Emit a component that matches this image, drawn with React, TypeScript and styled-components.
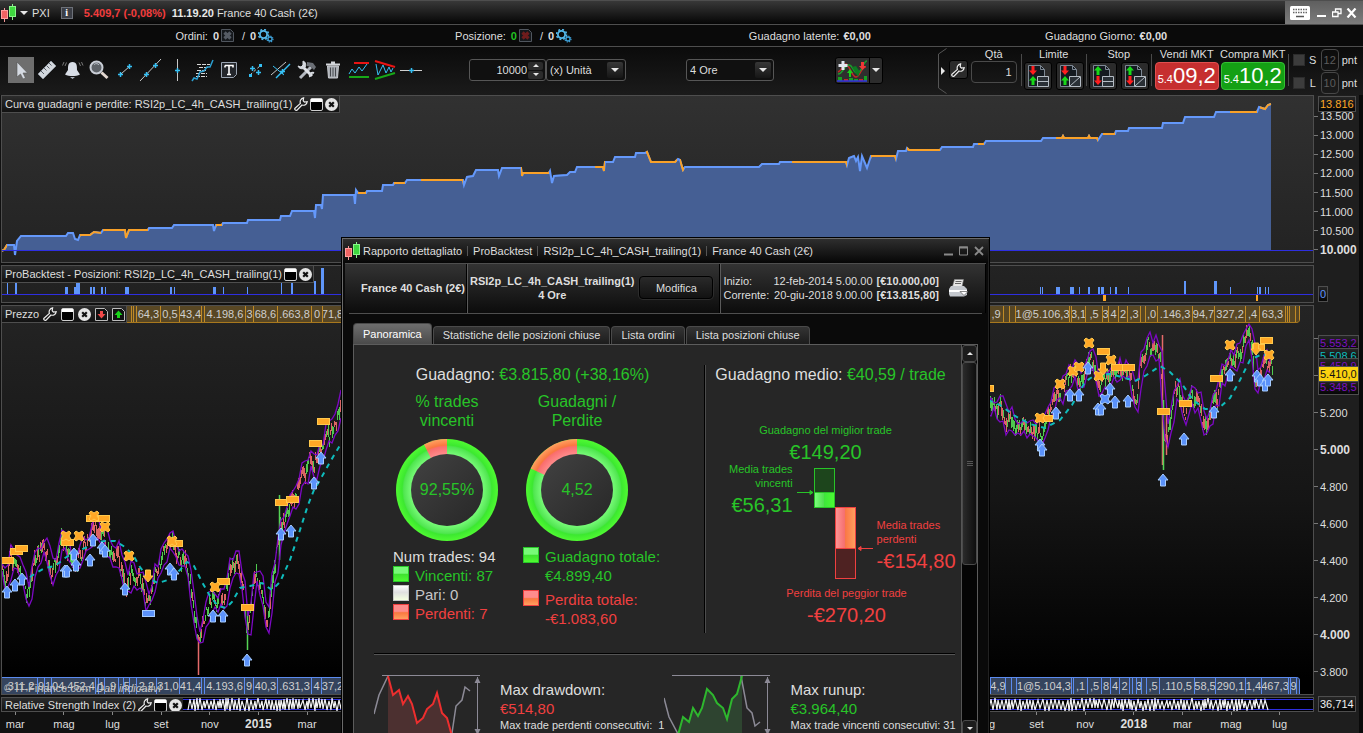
import React from "react";
import styled, { createGlobalStyle, css } from "styled-components";

const GlobalStyle = createGlobalStyle`
  * { box-sizing: border-box; }
  html, body, #root { height: 100%; }
  body {
    margin: 0;
    background: #0a0a0a;
    color: #dedede;
    font: 11px/14px "Liberation Sans", Arial, sans-serif;
    overflow: hidden;
  }
  button, input, select { font: inherit; color: inherit; margin: 0; padding: 0; border: 0; background: none; }
  svg { display: block; flex: none; }
  h1, h2, h3, p, dl, dd, dt, ul { margin: 0; padding: 0; font: inherit; list-style: none; }
`;

const LINE = "#4e4e4e";
const GREEN = "#28c428";
const RED = "#f04040";
const AMBER = "#ffa826";

/* ---------- helpers for the drawn series ---------- */

type Pt = [number, number];

const seeded = (seed: number) => () => {
  seed = (seed * 1664525 + 1013904223) % 4294967296;
  return seed / 4294967296;
};

const interpolate = (pts: Pt[], x: number) => {
  let i = 1;
  while (i < pts.length - 1 && pts[i][0] < x) i++;
  const [x0, y0] = pts[i - 1];
  const [x1, y1] = pts[i];
  return y0 + ((y1 - y0) * (x - x0)) / (x1 - x0);
};

const join = (pts: Pt[]) => pts.map((p) => p.join(",")).join(" ");

const equity: Pt[] = [
  [1, 250], [4, 249], [7, 244], [14, 244], [15, 254], [17, 240], [21, 235], [66, 235], [68, 232], [73, 232], [75, 238], [78, 239], [80, 234],
  [90, 234], [94, 231], [101, 232], [103, 229], [125, 229], [126, 237], [129, 229], [148, 229], [149, 227], [172, 227], [174, 224],
  [213, 224], [214, 230], [216, 224], [222, 224], [223, 222], [247, 222], [248, 219], [280, 219], [281, 215], [290, 215], [292, 210],
  [314, 210], [315, 217], [316, 204], [321, 204], [322, 208], [323, 194], [354, 194], [355, 203], [356, 189], [358, 192], [366, 192],
  [367, 190], [382, 190], [383, 184], [393, 184], [394, 182], [405, 182], [407, 179], [463, 179], [464, 184], [467, 176], [473, 175],
  [476, 169], [498, 169], [499, 175], [502, 167], [521, 167], [522, 175], [523, 172], [549, 172], [550, 170], [552, 182], [554, 175],
  [567, 174], [570, 171], [575, 171], [577, 166], [603, 166], [604, 170], [605, 161], [613, 161], [615, 156], [635, 156], [636, 152],
  [645, 152], [647, 151], [651, 161], [675, 161], [678, 158], [680, 159], [683, 169], [685, 166], [759, 166], [762, 163], [779, 163], [780, 161],
  [846, 161], [847, 164], [849, 157], [854, 155], [856, 160], [858, 156], [860, 170], [862, 155], [867, 167], [871, 155], [895, 155],
  [896, 158], [898, 150], [906, 150], [907, 147], [909, 149], [940, 149], [942, 146], [973, 146], [974, 143], [984, 143], [986, 140],
  [1041, 140], [1043, 137], [1062, 137], [1063, 135], [1064, 137], [1088, 137], [1089, 135], [1090, 137], [1097, 137], [1098, 139], [1102, 133],
  [1115, 133], [1116, 130], [1128, 130], [1129, 127], [1162, 127], [1163, 122], [1183, 122], [1185, 116], [1214, 116], [1216, 111],
  [1257, 111], [1259, 106], [1265, 108], [1268, 104], [1271, 103],
];

const equityFlat: Pt[] = [
  [1, 7], [80, 101], [103, 148], [216, 222], [358, 366], [394, 405], [421, 463], [521, 549], [595, 605], [646, 677], [680, 684],
  [792, 847], [871, 896], [907, 940], [978, 984], [1056, 1098], [1103, 1115], [1230, 1257], [1260, 1271],
];

const priceLeft: Pt[] = [
  [2, 572], [6, 575], [10, 560], [14, 556], [18, 560], [22, 576], [27, 594], [33, 572], [40, 550], [43, 547], [47, 560], [51, 572], [56, 560],
  [61, 548], [66, 546], [72, 556], [76, 554], [82, 550], [86, 545], [92, 530], [96, 529], [100, 536], [106, 545], [112, 554], [118, 548],
  [122, 570], [127, 575], [133, 563], [137, 580], [141, 595], [145, 604], [150, 599], [156, 575], [161, 562], [166, 545], [172, 547],
  [178, 555], [184, 562], [190, 582], [194, 610], [198, 643], [200, 646], [204, 620], [210, 605], [216, 596], [222, 600], [228, 578],
  [233, 562], [238, 560], [242, 575], [246, 628], [248, 622], [252, 585], [256, 576], [262, 595], [266, 618], [270, 602], [275, 570],
  [279, 525], [283, 520], [288, 515], [294, 500], [300, 482], [306, 468], [312, 458], [318, 450], [324, 443], [330, 440], [335, 425], [342, 396],
];

const priceRight: Pt[] = [
  [988, 415], [1000, 410], [1007, 420], [1013, 424], [1023, 434], [1030, 425], [1035, 438], [1041, 432], [1047, 418], [1055, 400],
  [1063, 383], [1077, 381], [1083, 373], [1088, 356], [1093, 365], [1098, 388], [1105, 387], [1110, 378], [1117, 374], [1123, 378],
  [1130, 381], [1137, 393], [1140, 360], [1150, 354], [1160, 354], [1162, 390], [1164, 430], [1167, 434], [1171, 420], [1177, 394],
  [1182, 392], [1185, 418], [1191, 400], [1197, 402], [1202, 434], [1210, 408], [1217, 392], [1223, 373], [1230, 358], [1240, 350],
  [1246, 334], [1252, 344], [1255, 370], [1260, 373], [1263, 360], [1272, 373],
];

const averageLeft: Pt[] = [
  [30, 577], [36, 573], [45, 568], [55, 566], [65, 558], [75, 552], [85, 548], [95, 543], [105, 541], [115, 541], [125, 547], [133, 555],
  [140, 567], [148, 578], [158, 583], [168, 580], [180, 570], [187, 562], [194, 566], [202, 582], [210, 596], [218, 606], [226, 608],
  [232, 602], [240, 588], [250, 586], [262, 583], [272, 590], [280, 582], [290, 560], [300, 530], [308, 505], [314, 490], [320, 480],
  [330, 462], [342, 442],
];

const averageRight: Pt[] = [
  [988, 400], [1000, 405], [1015, 416], [1030, 424], [1045, 428], [1060, 420], [1072, 405], [1085, 382], [1095, 375], [1110, 374],
  [1122, 377], [1135, 381], [1145, 376], [1160, 366], [1170, 372], [1182, 384], [1193, 400], [1205, 409], [1218, 409], [1230, 398],
  [1240, 380], [1250, 360], [1262, 354], [1271, 357],
];

const marks = {
  flat: [
    [7, 560], [16, 551], [21, 548], [67, 542], [103, 518], [92, 518], [176, 543], [223, 581], [247, 607], [281, 502], [292, 499], [315, 443],
    [323, 421], [987, 388], [1103, 351], [1117, 367], [1128, 367], [1216, 378], [1185, 403], [1163, 411], [1046, 418], [1258, 347], [1266, 340],
  ] as Pt[],
  cross: [
    [66, 536], [79, 536], [94, 516], [105, 527], [129, 556], [172, 541], [215, 587], [1040, 418], [1060, 384], [1073, 371], [1079, 367],
    [1089, 343], [1099, 376], [1111, 360], [1230, 345], [1269, 355],
  ] as Pt[],
  up: [
    [7, 592], [15, 585], [22, 579], [65, 571], [67, 571], [74, 554], [76, 565], [90, 560], [93, 540], [102, 548], [105, 551], [125, 589],
    [170, 569], [174, 574], [213, 616], [223, 616], [247, 660], [281, 534], [291, 531], [314, 483], [321, 458], [1056, 413], [1070, 395],
    [1079, 395], [1088, 368], [1098, 409], [1101, 409], [1110, 389], [1115, 402], [1128, 401], [1040, 445], [1042, 450], [1163, 480],
    [1184, 439], [1214, 412], [1230, 375], [1257, 376], [1260, 380], [1265, 385], [1268, 380],
  ] as Pt[],
  down: [[148, 576], [1103, 369], [1256, 349]] as Pt[],
};

const positionBars: [number, number, number][] = [
  [7, 1, 283], [15, 2, 283], [65, 3, 287], [74, 2, 287], [76, 4, 283], [90, 2, 287], [93, 2, 287], [101, 2, 287], [105, 1, 287],
  [125, 4, 287], [170, 2, 287], [174, 1, 287], [213, 3, 287], [223, 1, 287], [247, 1, 287], [281, 1, 283], [291, 2, 283], [314, 2, 281],
  [321, 3, 268], [1040, 1, 287], [1042, 1, 287], [1056, 4, 287], [1070, 4, 287], [1079, 1, 287], [1088, 2, 287], [1098, 2, 287],
  [1101, 3, 287], [1110, 1, 287], [1115, 2, 287], [1128, 1, 287], [1184, 2, 281], [1214, 3, 281], [1230, 1, 287], [1257, 1, 287],
  [1259, 2, 287], [1265, 1, 287], [1268, 1, 287],
];

/* ---------- shell ---------- */

const Shell = styled.div`
  position: relative;
  display: flex;
  flex-direction: column;
  height: 100vh;
  min-height: 600px;
  overflow: hidden;
  background: #0a0a0a;
`;

const TitleBar = styled.header`
  display: flex;
  align-items: stretch;
  height: 25px;
  border-top: 1px solid ${LINE};
  border-bottom: 1px solid ${LINE};
  background: linear-gradient(#383838, #050505);
  white-space: nowrap;
`;

const TitleInfo = styled.div`
  flex: 1;
  display: flex;
  align-items: center;
  padding-left: 1px;
`;

const Symbol = styled.button`
  display: flex;
  align-items: center;
  gap: 4px;
  margin-right: 11px;
`;

const InfoBadge = styled.button`
  width: 12px;
  height: 12px;
  margin-right: 11px;
  border: 1px solid #6c7078;
  background: #3b3e46;
  font: bold 10px/10px "Liberation Serif", serif;
  color: #fff;
`;

const Quote = styled.strong<{ $down?: boolean }>`
  margin-right: ${(p) => (p.$down ? 6 : 3)}px;
  color: ${(p) => (p.$down ? "#f23c3c" : "#e8e8e8")};
`;

const WindowControls = styled.div`
  display: flex;
  align-items: center;
  justify-content: center;
  gap: 4px;
  width: 78px;
  background: linear-gradient(#5f5f5f, #7c7c7c);
`;

const PlainButton = styled.button`
  display: inline-flex;
  align-items: center;
  justify-content: center;
`;

const StatusRow = styled.div`
  display: grid;
  grid-template-columns: 286fr 292fr 297fr 296fr;
  align-items: center;
  height: 22px;
  padding: 0 109px 0 84px;
  border-bottom: 1px solid ${LINE};
  background: #0a0a0a;
`;

const StatusItem = styled.div`
  display: flex;
  align-items: center;
  justify-content: center;
  gap: 4px;
  white-space: nowrap;
`;

const Count = styled.b<{ $green?: boolean }>`
  margin-left: 1px;
  color: ${(p) => (p.$green ? "#22c322" : "#dedede")};
  & + svg { margin-left: -2px; margin-right: 4px; }
`;

const Toolbar = styled.div`
  display: flex;
  align-items: center;
  height: 48px;
  padding-bottom: 2px;
  background: linear-gradient(#0b0b0b, #1b1b1b);
`;

const ToolList = styled.div`
  display: flex;
  flex: none;
  width: 469px;
  padding-left: 8px;
`;

const ToolButton = styled.button<{ $active?: boolean }>`
  display: flex;
  align-items: center;
  justify-content: center;
  width: 26px;
  height: 26px;
  background: ${(p) => (p.$active ? "#6e6e6e" : "none")};
`;

const Field = styled.div<{ $w: number; $apart?: boolean }>`
  position: relative;
  display: flex;
  align-items: center;
  flex: none;
  width: ${(p) => p.$w}px;
  height: 22px;
  margin-left: ${(p) => (p.$apart ? 60 : 0)}px;
  border: 1px solid #565656;
  border-radius: 3px;
  background: #101010;
`;

const NumberInput = styled.input`
  flex: 1;
  min-width: 0;
  text-align: right;
  padding-right: 1px;
  outline: 0;
`;

const Stepper = styled.div`
  display: flex;
  flex-direction: column;
  gap: 1px;
  margin-right: 2px;
`;

const StepButton = styled(PlainButton)`
  width: 15px;
  height: 8px;
  border-radius: 2px;
  background: #2b2b2b;
`;

const Select = styled.select`
  flex: 1;
  height: 20px;
  padding-left: 3px;
  appearance: none;
  outline: 0;
  option { background: #1a1a1a; }
`;

const SelectArrow = styled.span`
  position: absolute;
  right: 2px;
  top: 2px;
  display: flex;
  align-items: center;
  justify-content: center;
  width: 16px;
  height: 16px;
  border-radius: 2px;
  background: linear-gradient(#373737, #161616);
  pointer-events: none;
`;

const IndicatorGroup = styled.div`
  display: flex;
  flex: none;
  height: 27px;
  margin-left: 61px;
  border: 1px solid #000;
  border-radius: 3px;
  background: #2c2c2c;
  gap: 1px;
`;

const IndicatorMenu = styled(PlainButton)`
  width: 13px;
  border-left: 1px solid #000;
`;

const TradePanel = styled.div`
  display: flex;
  align-items: flex-start;
  align-self: flex-start;
  flex: none;
  margin-left: auto;
`;

const PanelGrip = styled(PlainButton)`
  width: 10px;
  height: 48px;
  margin-right: 1px;
`;

const Divider = styled.span`
  flex: none;
  width: 1px;
  height: 32px;
  margin: 7px 2px 0;
  background: #4a4a4a;
`;

const TradeGroup = styled.div`
  display: flex;
  flex-direction: column;
  align-items: center;
  gap: 1px;
  white-space: nowrap;
`;

const OptionsGroup = styled.div`
  padding-top: 13px;
`;

const QuantityGroup = styled(TradeGroup)`
  gap: 0;
  margin: 0 2px 0 3px;
`;

const QuantityInput = styled.input`
  width: 46px;
  height: 22px;
  padding-right: 4px;
  border: 1px solid #4a4a4a;
  border-radius: 4px;
  text-align: right;
`;

const DealGroup = styled(TradeGroup)`
  width: 66px;
`;

const TradeRow = styled.div`
  display: flex;
  gap: 4px;
`;

const DarkButton = styled(PlainButton)<{ $size: number }>`
  width: ${(p) => p.$size}px;
  height: ${(p) => p.$size}px;
  border: 1px solid #000;
  border-radius: 3px;
  background: #2b2b2b;
`;

const DealButton = styled.button<{ $color: string; $edge: string }>`
  width: 64px;
  height: 28px;
  padding: 0;
  border: 1px solid ${(p) => p.$edge};
  border-radius: 4px;
  background: ${(p) => p.$color};
  color: #fff;
  font-size: 22px;
  line-height: 26px;
  white-space: nowrap;
  small { font-size: 11px; }
`;

const StopRows = styled.div`
  display: flex;
  flex-direction: column;
  padding: 1px 6px 0 2px;
`;

const StopRow = styled.label`
  display: flex;
  align-items: center;
  gap: 3px;
  height: 23px;
  span { width: 10px; text-align: center; }
`;

const Check = styled.input`
  appearance: none;
  width: 12px;
  height: 12px;
  border: 1px solid #2c2c2c;
  background: #3c3c3c;
`;

const PointInput = styled.input`
  width: 18px;
  height: 22px;
  border: 1px solid #474747;
  border-radius: 4px;
  color: #5c5c5c;
  text-align: center;
`;

/* ---------- chart panels ---------- */

const Charts = styled.main`
  flex: 1;
  min-height: 0;
  display: flex;
  flex-direction: column;
  gap: 2px;
  padding: 0 4px 1px 1px;
  background: linear-gradient(90deg, #111 50%, #1e1e1e 50%, #1e1e1e calc(100% - 4px), #0a0a0a calc(100% - 4px));
`;

const panelHeight = {
  equity: css`flex: 0 0 168px;`,
  position: css`flex: 0 0 38px;`,
  price: css`flex: 1 1 0; min-height: 0;`,
  rsi: css`flex: 0 0 15px;`,
};

const Panel = styled.section<{ $kind: keyof typeof panelHeight }>`
  display: flex;
  ${(p) => panelHeight[p.$kind]}
`;

const plotFill = {
  equity: "linear-gradient(#313131, #222)",
  position: "linear-gradient(#232323, #202020)",
  price: "linear-gradient(#242424, #151515 50%, #000 96%)",
  rsi: "#000",
};

const Plot = styled.div<{ $kind: keyof typeof plotFill }>`
  position: relative;
  flex: 1;
  min-width: 0;
  border: 1px solid ${LINE};
  background: ${(p) => plotFill[p.$kind]};
  overflow: hidden;
`;

const Drawing = styled.svg`
  width: 100%;
  height: 100%;
`;

const PanelLabel = styled.div<{ $tall?: boolean; $gap?: number }>`
  position: absolute;
  left: 0;
  top: 0;
  z-index: 1;
  display: flex;
  align-items: center;
  gap: ${(p) => p.$gap ?? 2}px;
  height: ${(p) => (p.$tall ? 17 : 14)}px;
  padding: 0 1px 0 3px;
  border: solid ${LINE};
  border-width: ${(p) => (p.$tall ? "0 1px 1px 0" : "0")};
  background: linear-gradient(#2c2c2c, #121212);
  white-space: nowrap;
`;

const Axis = styled.aside`
  position: relative;
  flex: none;
  width: 45px;
  background: #1e1e1e;
`;

const Scale = styled.ol<{ $row: number; $top: number }>`
  display: flex;
  flex-direction: column;
  margin: 0;
  padding: ${(p) => p.$top}px 0 0;
  list-style: none;
  li {
    display: flex;
    align-items: center;
    gap: 2px;
    height: ${(p) => p.$row}px;
    white-space: nowrap;
  }
  li::before { content: ""; width: 4px; height: 1px; background: #777; }
  b { font-size: 12px; }
`;

const EquityScale = styled(Scale)`
  height: 162px;
  justify-content: space-between;
`;

const AxisTag = styled.div<{ $top: number; $color: string; $fill?: string }>`
  position: absolute;
  left: 4px;
  top: ${(p) => p.$top}px;
  height: 16px;
  padding: 0 1px;
  border: 1px solid ${LINE};
  background: ${(p) => p.$fill ?? "linear-gradient(#262626, #060606)"};
  color: ${(p) => p.$color};
  line-height: 14px;
`;

const Strip = styled.div<{ $blue?: boolean }>`
  position: absolute;
  left: 0;
  right: 13px;
  ${(p) => (p.$blue ? "bottom: 0;" : "top: 0;")}
  display: flex;
  height: 17px;
  overflow: hidden;
  border-${(p) => (p.$blue ? "top" : "bottom")}: 1px solid ${(p) => (p.$blue ? "#5b8bf0" : "#a8781e")};
  border-radius: ${(p) => (p.$blue ? "0 4px 0 0" : "0 0 4px 0")};
  background: ${(p) => (p.$blue ? "#35445e" : "#584724")};
`;

const StripCell = styled.span<{ $w: number; $blue?: boolean }>`
  display: flex;
  justify-content: center;
  flex: ${(p) => p.$w} ${(p) => p.$w} ${(p) => p.$w}px;
  min-width: 0;
  overflow: hidden;
  border-right: 1px solid ${(p) => (p.$blue ? "#5b8bf0" : "#c08a26")};
  line-height: 17px;
  white-space: nowrap;
  color: #cfcfcf;
`;

const Copyright = styled.small`
  position: absolute;
  left: 2px;
  bottom: -1px;
  font-size: 11px;
  color: #c4c4c4;
  i { margin-left: 2px; }
`;

const TimeAxis = styled.ol`
  flex: none;
  display: grid;
  grid-template-columns: repeat(27, 1fr);
  height: 20px;
  margin: -2px 55px 0 -10px;
  padding: 0;
  list-style: none;
  text-align: center;
  li::before { content: ""; display: block; width: 1px; height: 3px; margin: 0 auto 2px; background: #888; }
  b { font-size: 12px; }
`;

/* ---------- report window ---------- */

const Report = styled.section`
  position: absolute;
  z-index: 5;
  left: 341px;
  top: 237px;
  bottom: -6px;
  display: flex;
  flex-direction: column;
  width: 649px;
  border: 1px solid #000;
  background: #0a0a0a;
  box-shadow: inset 1px 1px 0 #6a6a6a, inset -1px 0 0 #222;
`;

const ReportTitle = styled.header`
  display: flex;
  align-items: center;
  flex: none;
  height: 24px;
  margin: 1px 1px 0;
  padding: 0 4px 0 2px;
  background: linear-gradient(#2e2e2e, #060606);
  white-space: nowrap;
  > span { margin-left: 3px; }
  > span + span { margin-left: 5px; padding-left: 5px; border-left: 1px solid #555; line-height: 10px; }
`;

const ReportButtons = styled.div`
  display: flex;
  gap: 5px;
  margin-left: auto;
`;

const ReportHead = styled.div`
  display: flex;
  align-items: stretch;
  flex: none;
  height: 50px;
  margin: 0 3px;
  border-top: 1px solid ${LINE};
  background: linear-gradient(#333, #0c0c0c);
`;

const HeadCell = styled.div<{ $w?: number }>`
  display: flex;
  align-items: center;
  justify-content: ${(p) => (p.$w ? "flex-end" : "flex-start")};
  flex: ${(p) => (p.$w ? `0 0 ${p.$w}px` : "1")};
  padding: 0 2px 2px;
  border-left: 1px solid #5a5a5a;
  box-shadow: inset -1px 0 0 #000;
  text-align: center;
  white-space: nowrap;
  &:first-child { border-left: 0; }
`;

const ModifyButton = styled.button`
  width: 74px;
  height: 23px;
  margin: 0 5px;
  border: 1px solid #000;
  border-radius: 4px;
  background: linear-gradient(#2a2a2a, #121212);
  box-shadow: 0 0 0 1px #2c2c2c;
`;

const Dates = styled.dl`
  display: grid;
  grid-template-columns: 50px auto auto;
  text-align: left;
  dd { text-align: right; }
  dd + dd { padding-left: 4px; }
`;

const PrintButton = styled(PlainButton)`
  margin-left: 9px;
`;

const Tabs = styled.div`
  display: flex;
  align-items: flex-end;
  flex: none;
  gap: 1px;
  margin: 0 7px;
  padding: 9px 4px 0;
  border-top: 1px solid ${LINE};
`;

const Tab = styled.button<{ $active?: boolean }>`
  height: ${(p) => (p.$active ? 21 : 18)}px;
  padding: 0 9px 1px;
  border: 1px solid #4a4a4a;
  border-bottom: 0;
  border-radius: 4px 4px 0 0;
  background: ${(p) => (p.$active ? "linear-gradient(#6e6e6e, #4a4a4a)" : "linear-gradient(#343434, #1c1c1c)")};
  color: ${(p) => (p.$active ? "#fff" : "#dedede")};
  white-space: nowrap;
`;

const ReportBody = styled.div`
  flex: 1;
  min-height: 0;
  display: flex;
  margin: 0 11px;
  border: 1px solid #5c5c5c;
  background: #262626;
`;

const Summary = styled.div`
  flex: 1;
  padding: 20px 6px 0 20px;
  overflow: hidden;
`;

const SummaryTop = styled.div`
  display: flex;
  height: 290px;
  border-bottom: 1px solid #555;
  box-shadow: inset 0 -1px 0 #000;
`;

const LeftHalf = styled.div`
  flex: none;
  width: 332px;
  height: 268px;
  padding-right: 14px;
  border-right: 1px solid #4c4c4c;
  box-shadow: inset -1px 0 0 #000;
`;

const Heading = styled.h2`
  font-size: 16px;
  line-height: 19px;
  white-space: nowrap;
  text-align: center;
`;

const Tone = styled.span<{ $c: string }>`
  color: ${(p) => p.$c};
`;

const DonutRow = styled.div`
  display: flex;
  gap: 2px;
  padding: 8px 0 0 9px;
`;

const DonutBox = styled.div`
  position: relative;
  display: flex;
  flex-direction: column;
  align-items: center;
  gap: 9px;
  width: 128px;
  color: ${GREEN};
  font-size: 16px;
  line-height: 19px;
  text-align: center;
`;

const DonutValue = styled.span`
  position: absolute;
  left: 0;
  right: 0;
  bottom: 42px;
`;

const Legends = styled.div`
  display: grid;
  grid-template-columns: 130px 1fr;
  padding: 6px 0 0 19px;
  font-size: 15px;
  line-height: 19px;
`;

const LegendItem = styled.p<{ $c?: string; $space?: boolean }>`
  display: flex;
  gap: 6px;
  margin-bottom: ${(p) => (p.$space ? 5 : 0)}px;
  color: ${(p) => p.$c ?? "#dedede"};
  white-space: nowrap;
`;

const Swatch = styled.i<{ $edge: string; $fill: string }>`
  flex: none;
  width: 16px;
  height: 16px;
  border: 1px solid ${(p) => p.$edge};
  background: ${(p) => p.$fill};
`;

const RightHalf = styled.div`
  flex: 1;
  min-width: 0;
  display: flex;
  flex-direction: column;
  align-items: center;
`;

const Caption = styled.p<{ $c: string }>`
  color: ${(p) => p.$c};
  white-space: nowrap;
`;

const Amount = styled.p<{ $c: string }>`
  color: ${(p) => p.$c};
  font-size: 20px;
  line-height: 30px;
  white-space: nowrap;
`;

const BestTrade = styled.div`
  margin-top: 39px;
  margin-right: 10px;
  text-align: center;
`;

const WorstTrade = styled.div`
  margin-top: 6px;
  margin-left: 32px;
  text-align: center;
`;

const BarsRow = styled.div`
  display: flex;
  align-items: flex-start;
  align-self: stretch;
  height: 118px;
  padding-left: 23px;
  margin-top: -5px;
`;

const WinSide = styled.div`
  width: 68px;
  padding-right: 3px;
  text-align: right;
`;

const LossSide = styled.div`
  padding-top: 56px;
`;

const SummaryBottom = styled.div`
  display: grid;
  grid-template-columns: 1fr 1fr;
  padding-top: 20px;
`;

const Extreme = styled.div`
  display: flex;
  gap: 18px;
  white-space: nowrap;
  h3 { padding-top: 5px; font-size: 15px; line-height: 19px; }
  p { font-size: 15px; line-height: 19px; }
  small { display: block; font-size: 11px; line-height: 14px; }
`;

const ScrollTrack = styled.div`
  display: flex;
  flex-direction: column;
  flex: none;
  width: 16px;
  border-left: 1px solid #555;
  background: #050505;
`;

const ScrollButton = styled(PlainButton)`
  flex: none;
  height: 17px;
  border: 1px solid #4a4a4a;
  border-radius: 3px;
  background: #1c1c1c;
`;

const ScrollThumb = styled.div`
  display: flex;
  align-items: center;
  justify-content: center;
  height: 206px;
  border: 1px solid #4a4a4a;
  border-radius: 3px;
  background: linear-gradient(90deg, #2b2b2b, #0e0e0e);
`;

const ScrollGap = styled.div`
  height: 157px;
`;

/* ---------- icons ---------- */

const CandleLogo = () => (
  <svg width="15" height="18" viewBox="0 0 15 18">
    <path d="M3.500 4v14" stroke="#f59a9a" />
    <rect x="0.500" y="6.500" width="6" height="8" fill="#f06464" stroke="#ff9e9e" />
    <path d="M11.500 0v16" stroke="#8af58a" />
    <rect x="8.500" y="2.500" width="6" height="10" fill="#3fd83f" stroke="#8af58a" />
  </svg>
);

const Triangle = ({ up, w = 8 }: { up?: boolean; w?: number }) => (
  <svg width={w} height={w / 2} viewBox="0 0 8 4">
    <path d={up ? "M0 4h8L4 0z" : "M0 0h8L4 4z"} fill="#e6e6e6" />
  </svg>
);

const Wrench = ({ size = 14 }: { size?: number }) => (
  <svg width={size} height={size} viewBox="0 0 14 14">
    <path
      d="M1 11.200L6.400 6.400C5.600 4.200 6.800 1.400 9.600 0.800L9.200 3.800l1.200 1.200L13.200 4.600c-.4 3-2.800 4.200-5.200 3.400L3 13.200C1.600 13.800 .2 12.400 1 11.200z"
      fill="#161616"
      stroke="#ececec"
      strokeWidth="1.200"
    />
  </svg>
);

const WindowIcon = () => (
  <svg width="13" height="13" viewBox="0 0 13 13">
    <rect x="0.500" y="0.500" width="12" height="12" rx="1.500" fill="#000" stroke="#cfcfcf" />
    <path d="M1 1h11v3H1z" fill="#fff" />
  </svg>
);

const CloseIcon = () => (
  <svg width="13" height="13" viewBox="0 0 13 13">
    <circle cx="6.500" cy="6.500" r="6.500" fill="#e4e4e4" />
    <path d="M4.200 4.200l4.600 4.600M8.800 4.200L4.200 8.800" stroke="#111" strokeWidth="2.200" />
  </svg>
);

const PageArrow = ({ up }: { up?: boolean }) => (
  <svg width="13" height="13" viewBox="0 0 13 13">
    <path d="M0.500 0.500h9l3 3v9h-12z" fill="#111" stroke="#bdbdbd" />
    <path d={up ? "M6.500 2.500l4 4.500h-2.500v3h-3V7H2.500z" : "M6.500 10.500l4-4.500h-2.500V3h-3v3H2.500z"} fill={up ? "#19d419" : "#f04848"} />
  </svg>
);

const CancelPage = ({ color }: { color: string }) => (
  <svg width="13" height="13" viewBox="0 0 13 13">
    <path d="M0.500 0.500h9l3 3v9h-12z" fill="#15181c" stroke="#50565e" />
    <path d="M3.500 3.500l6 6M9.500 3.500l-6 6" stroke={color} strokeWidth="3.200" />
  </svg>
);

const Gears = () => (
  <svg width="16" height="14" viewBox="0 0 16 14">
    <circle cx="5.500" cy="5.500" r="3.600" fill="none" stroke="#54b8ea" strokeWidth="1.800" />
    <circle cx="5.500" cy="5.500" r="5" fill="none" stroke="#54b8ea" strokeWidth="1.600" strokeDasharray="1.960 1.960" />
    <circle cx="12" cy="10" r="2" fill="none" stroke="#3d9fd6" strokeWidth="1.300" />
    <circle cx="12" cy="10" r="3" fill="none" stroke="#3d9fd6" strokeWidth="1.200" strokeDasharray="1.180 1.180" />
  </svg>
);

const CYAN = "#36c0f4";
const handle = (x: number, y: number) => <path key={`${x}-${y}`} d={`M${x - 2} ${y}.500h5M${x}.500 ${y - 2}v5`} stroke={CYAN} strokeWidth="1.500" />;

const tools: { name: string; art: React.ReactNode }[] = [
  { name: "Puntatore", art: <path d="M9 5v15l3.500-3 2.500 5 2.500-1-2.500-5h4.500z" fill="#d5dae2" stroke="#555" strokeWidth="0.600" /> },
  {
    name: "Righello",
    art: (
      <>
        <path d="M4 17L17 4l5 5L9 22z" fill="#d3d8de" stroke="#8d949c" />
        <path d="M7 14l3 3M10 11l2.500 2.500M12.500 8.500l3 3M15 6l2.500 2.500" stroke="#596069" />
      </>
    ),
  },
  {
    name: "Allarme",
    art: (
      <>
        <path d="M12.500 5C17 5 17 9 17 13l3 4.500c-4 2-11 2-15 0L8 13c0-4 0-8 4.500-8z" fill="#d8dde6" />
        <path d="M10 20h5l-2.500 2z" fill="#aab0ba" />
        <path d="M6.500 5.500L5 9M4 5L2.500 8.500M19 5.500L20.500 9M21.500 5L23 8.500" stroke="#777" />
      </>
    ),
  },
  {
    name: "Zoom",
    art: (
      <>
        <circle cx="10.500" cy="10.500" r="6" fill="#5d6268" stroke="#c9ced6" strokeWidth="2" />
        <path d="M8 7.500c2-1.500 4-1 5 .5" stroke="#b8bdc6" fill="none" />
        <path d="M15.500 15.500l6 5.500" stroke="#e2d7d0" strokeWidth="3" />
      </>
    ),
  },
  { name: "Segmento", art: <><path d="M9 17L18 9" stroke="#c8c8c8" />{handle(8, 17)}{handle(17, 9)}</> },
  { name: "Retta", art: <><path d="M2 24L23 2" stroke="#c8c8c8" />{handle(8, 17)}{handle(17, 8)}</> },
  { name: "Verticale", art: <><path d="M13.500 2v22" stroke="#c8c8c8" />{handle(13, 13)}</> },
  {
    name: "Regressione",
    art: (
      <>
        <path d="M7 7.500h13M9 10.500h10M7 13.500h10M6 16.500h11M6 19.500h11" stroke="#d8d8d8" strokeDasharray="4 1" />
        <path d="M2 24l2-3 3 1 3-7 4-1 3-4 3 0 3-7" fill="none" stroke="#2b9fd0" strokeWidth="1.500" />
      </>
    ),
  },
  {
    name: "Testo",
    art: (
      <>
        <path d="M5.500 5.500h15v12l-3 3h-12z" fill="#23262b" stroke="#9aa4b2" />
        <path d="M9 8.500h8v2M13 8.500v9M11 17.500h4M9 8.500v2" stroke="#fff" strokeWidth="1.600" fill="none" />
      </>
    ),
  },
  {
    name: "Punti",
    art: <><path d="M8 18L19 8" stroke="#c8c8c8" strokeDasharray="3 2" /><path d="M7 17h3v3H7zM17 7h3v3h-3z" fill={CYAN} />{handle(10, 11)}{handle(16, 15)}</>,
  },
  { name: "Canale", art: <><path d="M3 18L18 5" stroke="#c8c8c8" /><path d="M8 21L22 7" stroke={CYAN} strokeWidth="1.500" /><path d="M5 9l11 9" stroke={CYAN} />{handle(14, 14)}</> },
  {
    name: "Impostazioni",
    art: (
      <>
        <path d="M6 21L17 10" stroke="#b4b9c0" strokeWidth="3" />
        <path d="M13 5l6 1 3 4-2 3-3-3-4-1z" fill="#6b6f76" />
        <path d="M8 9l10 10" stroke="#e0e3e8" strokeWidth="3" />
        <path d="M9 4a4 4 0 1 1-5 5l3 1 2-2z" fill="#d4d8de" stroke="#d4d8de" />
        <path d="M16 20a3 3 0 0 1 4-4" stroke="#d4d8de" strokeWidth="2" fill="none" />
      </>
    ),
  },
  {
    name: "Cestino",
    art: (
      <>
        <path d="M7.500 9h11l-1 12h-9z" fill="#a9adb3" stroke="#c9ccd1" />
        <path d="M10.500 10.500v9M13 10.500v9M15.500 10.500v9" stroke="#45484d" />
        <path d="M6 7.500h14M11 5.500h4" stroke="#d3d6da" strokeWidth="2" />
      </>
    ),
  },
  {
    name: "Supporti",
    art: <><path d="M8 6h15" stroke="#e81414" strokeWidth="2" /><path d="M3 20h20" stroke="#17a817" strokeWidth="2" /><path d="M3 17l3-5 3 4 4-6 3 4 5-7" fill="none" stroke={CYAN} /></>,
  },
  {
    name: "Triangolo",
    art: <><path d="M3 4l20 6" stroke="#e81414" strokeWidth="2" /><path d="M3 22l20-6" stroke="#17a817" strokeWidth="2" /><path d="M4 7l2 11 5-10 3 8 3-6 2 5 2-4" fill="none" stroke={CYAN} /></>,
  },
  { name: "Orizzontale", art: <><path d="M2 13.500h22" stroke="#d0d0d0" />{handle(13, 13)}</> },
];

const OrderIcon = ({ stop, slash }: { stop?: boolean; slash?: boolean }) => {
  const green = "#18d818";
  const red = "#ff1e1e";
  const up = (x: number, y: number) => <path d={`M${x} ${y}l-4 4.500h2.500v4.500h3v-4.500H${x + 4}z`} fill={green} />;
  const down = (x: number, y: number) => <path d={`M${x} ${y}l-4-4.500h2.500v-4.500h3v4.500H${x + 4}z`} fill={red} />;
  return (
    <svg width="22" height="24" viewBox="0 0 22 24">
      <path d="M1.500 1.500h12l4 4v17h-16z" fill="#141a20" stroke="#7d8894" />
      <path d="M13.500 1.500v4h4" fill="none" stroke="#7d8894" />
      <path d="M10.500 12.500h11v10h-11z" fill="#2a3036" stroke="#b4bcc4" />
      <path d={slash ? "M11 22L21 13" : "M11 17.500h10"} stroke="#b4bcc4" />
      {stop ? up(6, 2) : down(6, 11)}
      {stop ? down(6, 21) : up(6, 12)}
    </svg>
  );
};

const IndicatorIcon = () => (
  <svg width="32" height="23" viewBox="0 0 32 23">
    <rect width="32" height="23" fill="#2e2e2e" />
    <path d="M2 13c4-1 5-8 8-8s6 13 10 13 5-10 10-10" fill="none" stroke="#c22626" strokeWidth="1.500" />
    <path d="M2 15c5 0 6-9 11-9 4 0 4 8 8 8 5 0 6-12 10-12" fill="none" stroke="#1d9b2d" strokeWidth="1.500" />
    <path d="M16 8l4-1 4 6-2 5z" fill="#0c7a20" />
    <path d="M7 2v9M2.500 6.500h9" stroke="#e3e6f0" strokeWidth="3" />
    <path d="M25 3v4h-2l3.500 4L30 7h-2V3z" fill="#f03838" />
    <path d="M13 18v-4h-2l3-4 3 4h-2v4z" fill="#19cf19" />
    <path d="M2 22v-4h4v4zM13 22v-3h4v3zM18 22v-2h4v2zM28 22v-5h3v5z" fill="#15a022" />
    <path d="M8 22v-2h4v2zM23 22v-2h4v2z" fill="#c22626" />
    <path d="M1 22h30" stroke="#3535e6" strokeWidth="1.500" />
  </svg>
);

const Printer = () => (
  <svg width="20" height="18" viewBox="0 0 20 18">
    <path d="M6.500 0.500h9l-1.500 7h-9.500z" fill="#e8e8e8" stroke="#888" strokeWidth="0.600" />
    <path d="M7.500 2.500h6M7 4.500h6" stroke="#666" />
    <path d="M3 7h13l3 3v6l-3 1.500H2L1 15v-5z" fill="#c4c8ce" />
    <path d="M1 12h18" stroke="#fff" strokeWidth="2" />
    <path d="M12 12.500h8l-4 4z" fill="#fff" stroke="#555" strokeWidth="0.700" />
  </svg>
);

/* ---------- drawings ---------- */

const EquityChart = () => (
  <Drawing viewBox="2 96 1311 166" preserveAspectRatio="none" aria-label="Curva guadagni e perdite">
    <clipPath id="flat-periods">
      {equityFlat.map(([a, b]) => (
        <rect key={a} x={a} y="96" width={b - a} height="166" />
      ))}
    </clipPath>
    <polygon points={`${join(equity)} 1271,250 1,250`} fill="#455f94" />
    <g fill="none" strokeWidth="2" transform="translate(0 1)">
      <polyline points={join(equity)} stroke="#6498fa" />
      <polyline points={join(equity)} stroke="#f9a128" clipPath="url(#flat-periods)" />
    </g>
    <path d="M2 250.500H1313" stroke="#2e2ee0" />
  </Drawing>
);

const PositionChart = () => (
  <Drawing viewBox="2 266 1311 36" preserveAspectRatio="none" aria-label="Posizioni">
    {positionBars.map(([x, w, y]) => (
      <rect key={x} x={x} y={y} width={w} height={294 - y} fill="#5f96fa" />
    ))}
    <path d="M1103 295h3v6h-3zM1256 295h2v6h-2z" fill={AMBER} />
    <path d="M2 294.500H1313" stroke="#2e2ee0" />
  </Drawing>
);

type SeriesProps = { points: Pt[]; average: Pt[]; seed: number; spikes: [number, number, number][] };

const PriceSeries = ({ points, average, seed, spikes }: SeriesProps) => {
  const rnd = seeded(seed);
  const from = points[0][0];
  const to = points[points.length - 1][0];
  const mids: number[] = [];
  let drift = 0;
  for (let x = from; x <= to; x++) {
    drift = drift * 0.75 + (rnd() - 0.5) * 15;
    mids.push(interpolate(points, x) + drift);
  }
  const upper: Pt[] = [];
  const lower: Pt[] = [];
  let green = "";
  let red = "";
  let rising = true;
  mids.forEach((mid, i) => {
    const x = from + i;
    if (rnd() > 0.6) rising = !rising;
    const seg = `M${x}.500 ${Math.round(mid - 1 - rnd() * 7)}V${Math.round(mid + 1 + rnd() * 7)}`;
    if (rising) green += seg;
    else red += seg;
    if (i % 3 === 0) {
      const near = mids.slice(Math.max(0, i - 3), i + 1);
      upper.push([x, Math.round(Math.min(...near) - rnd() * 10)]);
      lower.push([x, Math.round(Math.max(...near) + rnd() * 10)]);
    }
  });
  return (
    <g fill="none">
      <path d={green} stroke="#4fc94f" />
      <path d={red} stroke="#dc6464" />
      {spikes.map(([x, a, b]) => (
        <path key={x} d={`M${x}.500 ${a}V${b}`} stroke={x % 2 ? "#55d455" : "#e46a6a"} strokeWidth="1.500" />
      ))}
      <polyline points={join(upper)} stroke="#7d08c4" strokeWidth="1.300" />
      <polyline points={join(lower)} stroke="#7d08c4" strokeWidth="1.300" />
      <polyline points={join(average)} stroke="#0fbcbc" strokeWidth="2" strokeDasharray="5 5" />
    </g>
  );
};

const BLUE_EDGE = "#a6ccff";
const crossPath = "M-5-3l2-2 3 2 3-2 2 2-2 3 2 3-2 2-3-2-3 2-2-2 2-3z";
const arrowPath = "M0-6l5 6h-2.500v6h-5v-6h-2.500z";

const PriceChart = () => (
  <Drawing viewBox="2 306 1311 388" preserveAspectRatio="none" aria-label="Prezzo">
    <PriceSeries points={priceLeft} average={averageLeft} seed={7} spikes={[[198, 640, 675], [247, 610, 650], [279, 495, 560]]} />
    <PriceSeries points={priceRight} average={averageRight} seed={21} spikes={[[1162, 335, 465], [1163, 400, 470], [1166, 410, 455]]} />
    <g fill={AMBER} stroke="#ffc94d">
      {marks.flat.map(([x, y], i) => (
        <rect key={i} x={x - 6 + 0.5} y={y - 3 + 0.5} width="12" height="6" />
      ))}
      {marks.cross.map(([x, y], i) => (
        <path key={i} d={crossPath} transform={`translate(${x} ${y})`} />
      ))}
      {marks.down.map(([x, y], i) => (
        <path key={i} d={arrowPath} transform={`translate(${x} ${y}) rotate(180)`} />
      ))}
    </g>
    <g fill="#5b92fa" stroke={BLUE_EDGE}>
      {marks.up.map(([x, y], i) => (
        <path key={i} d={arrowPath} transform={`translate(${x} ${y})`} />
      ))}
      <path d={crossPath} transform="translate(1105 399)" />
      <rect x="142.500" y="610.500" width="12" height="6" />
    </g>
  </Drawing>
);

const RsiChart = () => {
  const rnd = seeded(5);
  const pts: Pt[] = [];
  for (let x = 188, i = 0; x < 1270; x += 1 + Math.round(rnd() * 1.6), i++) {
    pts.push([x, i % 2 ? 698 + Math.round(rnd() * 3) : 711 - Math.round(rnd() * 3)]);
  }
  return (
    <Drawing viewBox="2 698 1311 13" preserveAspectRatio="none" aria-label="RSI">
      <path d="M2 699.500H1313M2 709.500H1313" stroke="#2e2ee0" />
      <polyline points={join(pts)} fill="none" stroke="#f2f2f2" strokeWidth="1.200" />
    </Drawing>
  );
};

const Donut = ({ share }: { share: number }) => {
  const a = 2 * Math.PI * (1 - share);
  const at = (r: number) => `${51 - r * Math.sin(a)} ${51 - r * Math.cos(a)}`;
  return (
    <svg width="102" height="102" viewBox="0 0 102 102">
      <defs>
        <radialGradient id="win" gradientUnits="userSpaceOnUse" cx="51" cy="51" r="51">
          <stop offset="0.700" stopColor="#78fa78" />
          <stop offset="0.850" stopColor="#50e650" />
          <stop offset="0.880" stopColor="#3ce830" />
          <stop offset="1" stopColor="#50fa32" />
        </radialGradient>
        <radialGradient id="loss" gradientUnits="userSpaceOnUse" cx="51" cy="51" r="51">
          <stop offset="0.700" stopColor="#ff8c8c" />
          <stop offset="0.850" stopColor="#fa6e6e" />
          <stop offset="0.880" stopColor="#fa7840" />
          <stop offset="1" stopColor="#ffa060" />
        </radialGradient>
        <linearGradient id="hole" x1="0" y1="0" x2="1" y2="1">
          <stop offset="0" stopColor="#424242" />
          <stop offset="1" stopColor="#272727" />
        </linearGradient>
      </defs>
      <circle cx="51" cy="51" r="51" fill="url(#win)" />
      <path d={`M51 51L51 0A51 51 0 0 0 ${at(51)}z`} fill="url(#loss)" />
      <circle cx="51" cy="51" r="36" fill="url(#hole)" />
    </svg>
  );
};

const TradeBars = () => (
  <svg width="81" height="118" viewBox="797 463 81 118">
    <defs>
      <linearGradient id="bar-win"><stop offset="0" stopColor="#7dff7d" /><stop offset="0.450" stopColor="#52e052" /><stop offset="0.500" stopColor="#3ee83a" /><stop offset="1" stopColor="#4cfa32" /></linearGradient>
      <linearGradient id="bar-loss"><stop offset="0" stopColor="#ff9696" /><stop offset="0.450" stopColor="#f57070" /><stop offset="0.500" stopColor="#fa7846" /><stop offset="1" stopColor="#ffa060" /></linearGradient>
    </defs>
    <rect x="815.500" y="469.500" width="20" height="24" fill="#1d451c" stroke={GREEN} />
    <rect x="815.500" y="493.500" width="20" height="15" fill="url(#bar-win)" stroke={GREEN} />
    <rect x="836.500" y="508.500" width="20" height="41" fill="url(#bar-loss)" stroke={RED} />
    <rect x="836.500" y="549.500" width="20" height="30" fill="#4e2222" stroke={RED} />
    <path d="M798 493.500h16m-3-2l3 2-3 2z" stroke={GREEN} fill={GREEN} />
    <path d="M874 549.500h-15m3-2l-3 2 3 2z" stroke={RED} fill={RED} />
  </svg>
);

const DrawdownArt = () => (
  <svg width="108" height="80" viewBox="374 675 108 80">
    <path d="M388 676l5 19 6-5 4 14 5-8 4 8 5 19 6-5 4-9 6-5 4-11 5 20 5 5 5 18v20H388z" fill="#4c3030" />
    <path d="M374 714l5-19 9-19M452 733l4-27 6-6 3-13 5 4" fill="none" stroke="#8c8a96" strokeWidth="1.500" />
    <path d="M388 676l5 19 6-5 4 14 5-8 4 8 5 19 6-5 4-9 6-5 4-11 5 20 5 5 5 18" fill="none" stroke="#ee2e2e" strokeWidth="2" />
    <path d="M382 675.500h98M477.500 677v78" stroke="#8c8a96" />
    <path d="M477.500 677l3 6h-6zM477.500 735l3-6h-6z" fill="#8c8a96" />
  </svg>
);

const RunupArt = () => (
  <svg width="108" height="80" viewBox="664 675 108 80">
    <path d="M678 735l5-18 6 5 4-14 5 8 4-8 5-19 6 6 4 8 6 5 4 11 5-20 5-5 5-18V755H674z" fill="#2e4430" />
    <path d="M664 698l5 19 9 17M741 676l6 32 5 5 3 13 5-4" fill="none" stroke="#8c8a96" strokeWidth="1.500" />
    <path d="M678 735l5-18 6 5 4-14 5 8 4-8 5-19 6 6 4 8 6 5 4 11 5-20 5-5 5-18" fill="none" stroke="#2eb82e" strokeWidth="2" />
    <path d="M672 675.500h98M767.500 677v78" stroke="#8c8a96" />
    <path d="M767.500 677l3 6h-6zM767.500 735l3-6h-6z" fill="#8c8a96" />
  </svg>
);

/* ---------- strip and axis contents ---------- */

type Cell = [number, string];

const upperStrip: Cell[] = [
  [130, ""], [2, ""], [3, ""], [24, "64,3"], [19, "0,5"], [22, "43,4"], [3, ""], [41, "4.198,6"], [8, "3"], [24, "68,6"], [34, ".663,8"],
  [11, "0"], [20, "71,8"], [647, ""], [15, ",9"], [6, ""], [6, ""], [54, "1@5.106,3"], [2, ""], [14, "3,1"], [17, ",5"], [6, "3"],
  [10, "4"], [9, "2"], [13, ",3"], [5, ""], [12, ",0"], [35, ".146,3"], [22, "94,7"], [31, "327,2"], [14, ",4"], [26, "63,3"], [2, ""],
  [2, ""], [6, ""], [4, ""],
];

const lowerStrip: Cell[] = [
  [36, ".311,2"], [7, "9"], [7, "1"], [44, "04.452,4"], [3, ""], [6, "1"], [14, ",9"], [5, ""], [6, "5"], [7, ""], [20, "2,2"],
  [23, "31,0"], [22, "41,4"], [3, ""], [40, "4.193,6"], [9, "9"], [24, "40,3"], [34, ".631,3"], [10, "4"], [22, "37,2"], [647, ""],
  [15, "4,9"], [6, ""], [5, ""], [55, "1@5.104,3"], [2, ""], [14, ",1"], [14, ",5"], [9, "8"], [9, "4"], [10, "2"], [3, ""], [4, ""],
  [5, "3"], [5, ""], [13, ",5"], [35, ".110,5"], [21, "58,5"], [30, "290,1"], [16, "1,4"], [27, "467,3"], [2, ""], [6, "9"], [3, ""],
];

const equityTicks = ["13.500", "13.000", "12.500", "12.000", "11.500", "11.000", "10.500", "10.000"];
const priceTicks = ["5.600", "5.400", "5.200", "5.000", "4.800", "4.600", "4.400", "4.200", "4.000", "3.800"];
/* The ticks behind the report window carry no label. */
const coveredTicks: string[] = Array(12).fill("");
const timeline = ["mar", "mag", "lug", "set", "nov", "2015", "mar", ...coveredTicks, "", "lug", "set", "nov", "2018", "mar", "mag", "lug"];

const bold = (text: string, test: boolean) => (test ? <b>{text}</b> : text);

const swatchWin = "linear-gradient(#78fa78 0 45%, #3ee030 50%, #50fa32)";
const swatchLoss = "linear-gradient(#ff8c8c 0 45%, #fa7840 55%, #ffa060)";
const swatchEven = "linear-gradient(#fff, #e0e0e0 45%, #f4ffe0)";

export default function App() {
  return (
    <>
      <GlobalStyle />
      <Shell>
        <TitleBar>
          <TitleInfo>
            <Symbol>
              <CandleLogo />
              <Triangle />
              PXI
            </Symbol>
            <InfoBadge>i</InfoBadge>
            <Quote $down>5.409,7 (-0,08%)</Quote>
            <Quote>11.19.20</Quote>
            <span>France 40 Cash (2€)</span>
          </TitleInfo>
          <WindowControls>
            <PlainButton aria-label="Tastiera">
              <svg width="20" height="14" viewBox="0 0 20 14">
                <rect width="20" height="14" rx="1.500" fill="#fff" />
                <path d="M3 3.500h14M3 6.500h14" stroke="#666" strokeWidth="1.500" strokeDasharray="1.500 1" />
                <path d="M6 10.500h8" stroke="#555" strokeWidth="1.500" />
              </svg>
            </PlainButton>
            <PlainButton aria-label="Riduci">
              <svg width="14" height="12" viewBox="0 0 14 12"><path d="M3 9h9" stroke="#fff" strokeWidth="2" /></svg>
            </PlainButton>
            <PlainButton aria-label="Ripristina">
              <svg width="10" height="10" viewBox="0 0 10 10"><path d="M0.500 4h5.500v4.500H0.500zM3.500 4V1h5.500v4.500H6.500" fill="none" stroke="#fff" strokeWidth="1.300" /></svg>
            </PlainButton>
            <PlainButton aria-label="Chiudi">
              <svg width="12" height="10" viewBox="0 0 12 10"><path d="M1.500 0.500l8 9M9.500 0.500l-8 9" stroke="#fff" strokeWidth="2.200" /></svg>
            </PlainButton>
          </WindowControls>
        </TitleBar>

        <StatusRow>
          <StatusItem>Ordini: <Count>0</Count><CancelPage color="#555b64" /> / <Count>0</Count><Gears /></StatusItem>
          <StatusItem>Posizione: <Count $green>0</Count><CancelPage color="#6e1c1c" /> / <Count>0</Count><Gears /></StatusItem>
          <StatusItem>Guadagno latente: <b>€0,00</b></StatusItem>
          <StatusItem>Guadagno Giorno: <b>€0,00</b></StatusItem>
        </StatusRow>

        <Toolbar>
          <ToolList>
            {tools.map((t, i) => (
              <ToolButton key={t.name} $active={i === 0} aria-label={t.name}>
                <svg width="26" height="26" viewBox="0 0 26 26">{t.art}</svg>
              </ToolButton>
            ))}
          </ToolList>
          <Field $w={77}>
            <NumberInput aria-label="Quantità di barre" defaultValue="10000" />
            <Stepper>
              <StepButton aria-label="Aumenta"><Triangle up w={6} /></StepButton>
              <StepButton aria-label="Diminuisci"><Triangle w={6} /></StepButton>
            </Stepper>
          </Field>
          <Field $w={80}>
            <Select aria-label="Unità"><option>(x) Unità</option></Select>
            <SelectArrow><Triangle /></SelectArrow>
          </Field>
          <Field $w={88} $apart>
            <Select aria-label="Periodo"><option>4 Ore</option></Select>
            <SelectArrow><Triangle /></SelectArrow>
          </Field>
          <IndicatorGroup>
            <PlainButton aria-label="Indicatori"><IndicatorIcon /></PlainButton>
            <IndicatorMenu aria-label="Menu indicatori"><Triangle /></IndicatorMenu>
          </IndicatorGroup>

          <TradePanel>
            <PanelGrip aria-label="Comprimi">
              <svg width="10" height="46" viewBox="0 0 10 46">
                <path d="M8.500 0.500L0.500 6V40l8 5.500" fill="none" stroke="#555" />
                <path d="M3 19v8l4-4z" fill="#e6e6e6" />
              </svg>
            </PanelGrip>
            <OptionsGroup><DarkButton $size={19} aria-label="Opzioni"><Wrench /></DarkButton></OptionsGroup>
            <QuantityGroup>
              <label htmlFor="qty">Qtà</label>
              <QuantityInput id="qty" defaultValue="1" />
            </QuantityGroup>
            <Divider />
            <TradeGroup>
              Limite
              <TradeRow>
                <DarkButton $size={28} aria-label="Limite"><OrderIcon /></DarkButton>
                <DarkButton $size={28} aria-label="Limite personalizzato"><OrderIcon slash /></DarkButton>
              </TradeRow>
            </TradeGroup>
            <Divider />
            <TradeGroup>
              Stop
              <TradeRow>
                <DarkButton $size={28} aria-label="Stop"><OrderIcon stop /></DarkButton>
                <DarkButton $size={28} aria-label="Stop personalizzato"><OrderIcon stop slash /></DarkButton>
              </TradeRow>
            </TradeGroup>
            <Divider />
            <DealGroup>
              Vendi MKT
              <DealButton $color="#c62f2f" $edge="#e05050"><small>5.4</small>09,2</DealButton>
            </DealGroup>
            <DealGroup>
              Compra MKT
              <DealButton $color="#14a014" $edge="#34c034"><small>5.4</small>10,2</DealButton>
            </DealGroup>
            <Divider />
            <StopRows>
              <StopRow><Check type="checkbox" /><span>S</span><PointInput aria-label="S punti" defaultValue="12" disabled />pnt</StopRow>
              <StopRow><Check type="checkbox" /><span>L</span><PointInput aria-label="L punti" defaultValue="10" disabled />pnt</StopRow>
            </StopRows>
          </TradePanel>
        </Toolbar>

        <Charts>
          <Panel $kind="equity">
            <Plot $kind="equity">
              <PanelLabel $tall>Curva guadagni e perdite: RSI2p_LC_4h_CASH_trailing(1)<Wrench /><WindowIcon /><CloseIcon /></PanelLabel>
              <EquityChart />
            </Plot>
            <Axis>
              <EquityScale $row={14} $top={14}>
                {equityTicks.map((t) => <li key={t}>{bold(t, t === "10.000")}</li>)}
              </EquityScale>
              <AxisTag $top={1} $color={AMBER}>13.816</AxisTag>
            </Axis>
          </Panel>
          <Panel $kind="position">
            <Plot $kind="position">
              <PanelLabel $tall>ProBacktest - Posizioni: RSI2p_LC_4h_CASH_trailing(1)<WindowIcon /><CloseIcon /></PanelLabel>
              <PositionChart />
            </Plot>
            <Axis><AxisTag $top={21} $color="#5f96fa">0</AxisTag></Axis>
          </Panel>
          <Panel $kind="price">
            <Plot $kind="price">
              <PriceChart />
              <Strip>
                {upperStrip.map(([w, t], i) => <StripCell key={i} $w={w}>{t}</StripCell>)}
              </Strip>
              <Strip $blue>
                {lowerStrip.map(([w, t], i) => <StripCell key={i} $w={w} $blue>{t}</StripCell>)}
              </Strip>
              <Copyright>© IT-Finance.com <i>Dati indicativi</i></Copyright>
              <PanelLabel $tall $gap={4}>Prezzo<Wrench /><WindowIcon /><CloseIcon /><PageArrow /><PageArrow up /></PanelLabel>
            </Plot>
            <Axis>
              <Scale $row={37} $top={15}>
                {priceTicks.map((t) => <li key={t}>{bold(t, t === "5.000" || t === "4.000")}</li>)}
              </Scale>
              <AxisTag $top={30} $color="#7d10c0">5.553,2</AxisTag>
              <AxisTag $top={43} $color="#0fbcbc">5.508,6</AxisTag>
              <AxisTag $top={53} $color="#7d10c0">5.450,9</AxisTag>
              <AxisTag $top={74} $color="#7d10c0">5.348,5</AxisTag>
              <AxisTag $top={61} $color="#111" $fill="#fbd20f">5.410,0</AxisTag>
            </Axis>
          </Panel>
          <Panel $kind="rsi">
            <Plot $kind="rsi">
              <PanelLabel>Relative Strength Index (2)<Wrench /><WindowIcon /><CloseIcon /></PanelLabel>
              <RsiChart />
            </Plot>
            <Axis><AxisTag $top={-1} $color="#f0f0f0">36,714</AxisTag></Axis>
          </Panel>
          <TimeAxis>
            {timeline.map((t, i) => <li key={i}>{bold(t, t.startsWith("20"))}</li>)}
          </TimeAxis>
        </Charts>

        <Report>
          <ReportTitle>
            <CandleLogo />
            <span>Rapporto dettagliato</span><span>ProBacktest</span><span>RSI2p_LC_4h_CASH_trailing(1)</span><span>France 40 Cash (2€)</span>
            <ReportButtons>
              <PlainButton aria-label="Riduci"><svg width="10" height="10"><path d="M0 8.500h9" stroke="#8a8a8a" strokeWidth="2" /></svg></PlainButton>
              <PlainButton aria-label="Ingrandisci"><svg width="10" height="10"><path d="M0.500 1h8v8h-8z" fill="none" stroke="#8a8a8a" /><path d="M0 1.500h9" stroke="#8a8a8a" strokeWidth="2" /></svg></PlainButton>
              <PlainButton aria-label="Chiudi"><svg width="10" height="10"><path d="M1 1l8 8M9 1L1 9" stroke="#8a8a8a" strokeWidth="1.800" /></svg></PlainButton>
            </ReportButtons>
          </ReportTitle>
          <ReportHead>
            <HeadCell $w={122}><b>France 40 Cash (2€)</b></HeadCell>
            <HeadCell $w={253}>
              <b>RSI2p_LC_4h_CASH_trailing(1)<br />4 Ore</b>
              <ModifyButton>Modifica</ModifyButton>
            </HeadCell>
            <HeadCell>
              <Dates>
                <dt>Inizio:</dt><dd>12-feb-2014 5.00.00</dd><dd><b>[€10.000,00]</b></dd>
                <dt>Corrente:</dt><dd>20-giu-2018 9.00.00</dd><dd><b>[€13.815,80]</b></dd>
              </Dates>
              <PrintButton aria-label="Stampa"><Printer /></PrintButton>
            </HeadCell>
          </ReportHead>
          <Tabs role="tablist">
            <Tab role="tab" $active>Panoramica</Tab>
            <Tab role="tab">Statistiche delle posizioni chiuse</Tab>
            <Tab role="tab">Lista ordini</Tab>
            <Tab role="tab">Lista posizioni chiuse</Tab>
          </Tabs>
          <ReportBody>
            <Summary>
              <SummaryTop>
                <LeftHalf>
                  <Heading>Guadagno: <Tone $c={GREEN}>€3.815,80 (+38,16%)</Tone></Heading>
                  <DonutRow>
                    <DonutBox><span>% trades<br />vincenti</span><Donut share={0.9255} /><DonutValue>92,55%</DonutValue></DonutBox>
                    <DonutBox><span>Guadagni /<br />Perdite</span><Donut share={0.819} /><DonutValue>4,52</DonutValue></DonutBox>
                  </DonutRow>
                  <Legends>
                    <div>
                      <LegendItem>Num trades: 94</LegendItem>
                      <LegendItem $c={GREEN}><Swatch $edge="#28c828" $fill={swatchWin} />Vincenti: 87</LegendItem>
                      <LegendItem $c="#c8c8c8"><Swatch $edge="#c8c8c8" $fill={swatchEven} />Pari: 0</LegendItem>
                      <LegendItem $c={RED}><Swatch $edge={RED} $fill={swatchLoss} />Perdenti: 7</LegendItem>
                    </div>
                    <div>
                      <LegendItem $c={GREEN} $space><Swatch $edge="#28c828" $fill={swatchWin} /><span>Guadagno totale:<br />€4.899,40</span></LegendItem>
                      <LegendItem $c={RED}><Swatch $edge={RED} $fill={swatchLoss} /><span>Perdita totale:<br />-€1.083,60</span></LegendItem>
                    </div>
                  </Legends>
                </LeftHalf>
                <RightHalf>
                  <Heading>Guadagno medio: <Tone $c={GREEN}>€40,59 / trade</Tone></Heading>
                  <BestTrade>
                    <Caption $c={GREEN}>Guadagno del miglior trade</Caption>
                    <Amount $c={GREEN}>€149,20</Amount>
                  </BestTrade>
                  <BarsRow>
                    <WinSide>
                      <Caption $c={GREEN}>Media trades<br />vincenti</Caption>
                      <Amount $c={GREEN}>€56,31</Amount>
                    </WinSide>
                    <TradeBars />
                    <LossSide>
                      <Caption $c={RED}>Media trades<br />perdenti</Caption>
                      <Amount $c={RED}>-€154,80</Amount>
                    </LossSide>
                  </BarsRow>
                  <WorstTrade>
                    <Caption $c={RED}>Perdita del peggior trade</Caption>
                    <Amount $c={RED}>-€270,20</Amount>
                  </WorstTrade>
                </RightHalf>
              </SummaryTop>
              <SummaryBottom>
                <Extreme>
                  <DrawdownArt />
                  <div>
                    <h3>Max drawdown:</h3>
                    <p><Tone $c={RED}>€514,80</Tone></p>
                    <small>Max trade perdenti consecutivi: &nbsp;1</small>
                  </div>
                </Extreme>
                <Extreme>
                  <RunupArt />
                  <div>
                    <h3>Max runup:</h3>
                    <p><Tone $c={GREEN}>€3.964,40</Tone></p>
                    <small>Max trade vincenti consecutivi: 31</small>
                  </div>
                </Extreme>
              </SummaryBottom>
            </Summary>
            <ScrollTrack>
              <ScrollButton aria-label="Su"><Triangle up w={6} /></ScrollButton>
              <ScrollThumb><svg width="6" height="6"><path d="M0 .5h6M0 2.500h6M0 4.500h6" stroke="#555" /></svg></ScrollThumb>
              <ScrollGap />
              <ScrollButton aria-label="Giù"><Triangle w={6} /></ScrollButton>
            </ScrollTrack>
          </ReportBody>
        </Report>
      </Shell>
    </>
  );
}
